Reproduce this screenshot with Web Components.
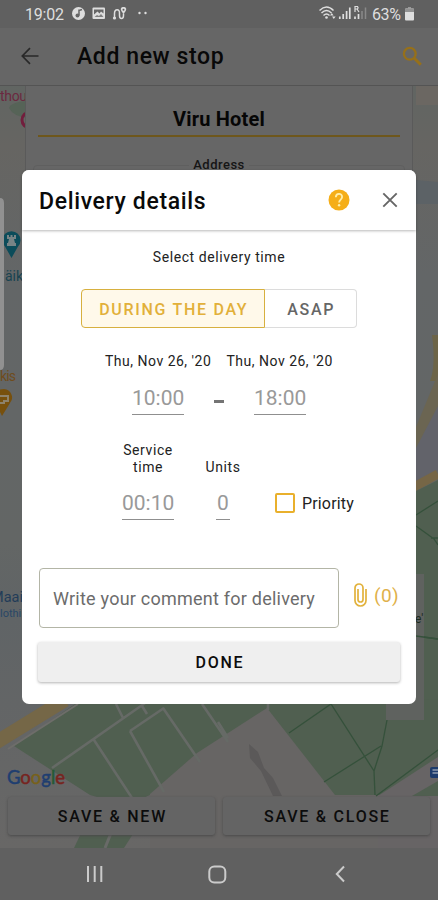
<!DOCTYPE html>
<html lang="en">
<head>
<meta charset="utf-8">
<title>Delivery details</title>
<style>
html,body{margin:0;height:100%;overflow:hidden;background:#666}
body{font-family:Roboto,"Liberation Sans",sans-serif}
</style>
</head>
<body>
<delivery-app></delivery-app>
<script>
const define = (name, html) => {
  const t = document.createElement('template');
  t.innerHTML = html;
  customElements.define(name, class extends HTMLElement {
    connectedCallback() {
      if (this.shadowRoot) return;
      this.attachShadow({mode: 'open'}).append(t.content.cloneNode(true));
    }
  });
};

define('status-bar', `
<style>
:host{display:flex;align-items:center;height:28px;box-sizing:border-box;padding:0 24px 0 25px;background:#606060;color:#dedede;font-size:16px;line-height:28px;flex:none}
.clock{width:47px;letter-spacing:-.2px;padding-top:1px}
svg{display:block;flex:none}
.gap{flex:1}
.pct{margin-left:5px;width:33px;letter-spacing:-.4px;padding-top:1px}
</style>
<span class="clock">19:02</span>
<svg width="80" height="28" viewBox="72 0 80 28"><circle cx="78.500" cy="13.500" r="6.500" fill="#dedede"/><path d="M79 9.500v6M79 10.500l3-1" stroke="#666" stroke-width="1.500" fill="none"/><circle cx="77.500" cy="15.500" r="2" fill="#666"/>
<rect x="92.500" y="7.500" width="12.500" height="11.500" rx="1" fill="#dedede"/><path d="M94 9.500h9.500v4l-2.500-2-1.500 2-2-2-3.500 3z" fill="#666"/><path d="M94.500 17l2.500-2 2 1 2-2 2.500 3z" fill="#808080"/>
<path d="M114.500 18.500v-5c0-5 5.500-5 5 0v2c0 4 4 4 4 0v-2" fill="none" stroke="#dedede" stroke-width="1.500"/><circle cx="114.500" cy="18" r="1.600" fill="#dedede"/><path d="M123.500 14c-5-5.500-2-7 0-7s5 1.500 0 7z" fill="#dedede"/><circle cx="123.500" cy="9.700" r="1" fill="#606060"/>
<circle cx="139.500" cy="13" r="1.200" fill="#dedede"/><circle cx="145.500" cy="13" r="1.200" fill="#dedede"/></svg>
<span class="gap"></span>
<svg width="48" height="28" viewBox="319 0 48 28"><g fill="none" stroke="#dedede" stroke-width="1.500"><path d="M319.500 10.500Q326.500 3.500 333.500 10.500M321.500 13Q326.500 8 331.500 13M323.500 15.500Q326.500 12.500 329.500 15.500"/></g><circle cx="326.500" cy="17.500" r="1.300" fill="#dedede"/><path d="M330 15.500l1.800-2.500 1.800 2.500zM332 16.500h3.600l-1.800 2.500z" fill="#dedede"/>
<path d="M339.800 19v-2.500M343.200 19v-5M346.600 19v-8M349.800 19v-11.500" stroke="#dedede" stroke-width="1.700"/><path d="M355 12V6.500h2.500q1.200 1.200 0 2.500H355M357 9l2 3" fill="none" stroke="#dedede" stroke-width="1.200"/><path d="M355 19v-2.500M358.500 19v-5" stroke="#dedede" stroke-width="1.700"/><path d="M362 19v-8M365.500 19v-11.500" stroke="#898989" stroke-width="1.500"/></svg>
<span class="pct">63%</span>
<svg width="9" height="14" viewBox="0 0 9 14"><path d="M3 0h3v1.500H3z" fill="#999"/><rect y="1.500" width="9" height="12" rx="1" fill="#dedede"/><path d="M0 2.500q0-1 1-1h7q1 0 1 1V5H0z" fill="#929292"/></svg>`);

define('app-header', `
<style>
:host{display:flex;align-items:center;height:58px;box-sizing:border-box;padding:0 16px 0 21px;background:#666;flex:none;border-bottom:1px solid #545454}
h1{flex:1;margin:0 0 0 38px;font-size:23px;font-weight:500;letter-spacing:.6px;color:#080808}
svg{flex:none;display:block}
</style>
<svg width="18" height="18" viewBox="0 0 18 18" style="margin-bottom:1px"><path d="M17.500 9H1.500M9 1.200L1.300 9 9 16.800" fill="none" stroke="#292929" stroke-width="1.700"/></svg>
<h1><slot></slot></h1>
<svg width="20" height="20" viewBox="0 0 20 20" style="margin-bottom:2px"><circle cx="7.800" cy="7.800" r="5.900" fill="none" stroke="#96701a" stroke-width="2.300"/><path d="M11.900 11.900l6.900 6.900" stroke="#96701a" stroke-width="2.900"/></svg>`);

define('city-map', `
<style>
:host{display:block;position:absolute;inset:0;font-family:Roboto,"Liberation Sans",sans-serif}
svg{display:block}
</style>
<svg width="438" height="762" viewBox="0 86 438 762">
<defs><linearGradient id="l" x2="0" y2="1"><stop offset="0" stop-color="#616562"/><stop offset=".08" stop-color="#666562"/><stop offset=".25" stop-color="#636667"/><stop offset=".6" stop-color="#636665"/><stop offset=".7" stop-color="#606466"/><stop offset="1" stop-color="#686766"/></linearGradient></defs>
<rect y="85" width="438" height="763" fill="url(#l)"/>
<path d="M416 85h22v20h-22z" fill="#6b6762"/><path d="M416 180l22 2v22h-22z" fill="#5c6266"/>
<path d="M9 108q2-6 18-7v17q-14-2-18-10z" fill="#566357"/>
<path d="M416 435L438 395V470L416 483z" fill="#62636a"/>
<path d="M432 335h6v46h-8q6-15 2-46z" fill="#6c6448"/><path d="M416 427l22-53v32l-22 42z" fill="#6b6552"/><path d="M414 487l24-13" stroke="#766646" stroke-width="9"/>
<path d="M414 492l24-12V766L381 848H300L266 705H200z" fill="#505f50"/>
<path d="M75 704L14 746l76 49q38 12 62-1l68-52 48-33 64 86h58l48-29 0-67z" fill="#505f50"/>
<path d="M197 753L267 708L335 795V848H150V794z" fill="#676564"/>
<path d="M335 795h46v53h-46z" fill="#676564"/>
<path d="M378 796L438 757v91h-60z" fill="#676465"/><path d="M412 796l26-15v15z" fill="#505f50"/>
<path d="M74 848l12-25h54l-16 25z" fill="#505f50"/><path d="M105 848l10-25" stroke="#696a68" stroke-width="3"/>
<path d="M-5 743L65 700" stroke="#756747" stroke-width="14"/><path d="M8 749l70-45" stroke="#6e6d6a" stroke-width="2"/>
<g fill="none" stroke="#666a66" stroke-width="2.600"><path d="M52 768L148 701M94 740l38 58M130 731l34-23M130 731l34 61M163 708l37 54M202 704l26 38M116 704l7 14M142 706l5 8M268 700v10M218 722l10 16"/></g>
<g fill="none" stroke="#35513b" stroke-width="1.300"><path d="M289 733l42-29 43 67 1 24M324 782l57-36M387 720l-5 26-8 25M376 796l62-46M416 515l22-14M416 526l18 13 4 6M431 538h7M416 636l22 3"/></g>
<path d="M386 574h38v146h-38z" fill="#5f625f"/><path d="M416 636l22 3" stroke="#35513b" stroke-width="1.300"/>
<path d="M249 744l9 8 6 16 9 10 9 18h-9l-12-25-11-13z" fill="#5b5959"/>
<g font-size="14"><text x="0" y="101" fill="#6c2940" textLength="27">thou</text><text x="5" y="281" fill="#184350">äik</text><text x="0" y="381" fill="#6f4c1d" textLength="16">kis</text><text x="-9" y="602" font-size="14.500" fill="#233c58">Maai</text><text x="0" y="616.500" font-size="11" fill="#294767">lothi</text><text x="415" y="623" font-size="12" fill="#1c2b20">e'</text></g>
<circle cx="30" cy="120" r="8" fill="none" stroke="#721e3d" stroke-width="3"/>
<path d="M11.500 258L5 246.500a9 9 0 1 1 13 0z" fill="#0c4c5a"/><path d="M7 235h2v2h1.500v-2h2v2H14v-2h2v4h-2l1 4h1v3H7v-3h1l1-4H7z" fill="#788486"/>
<path d="M2 416l-6-12V392q2-3 8-3a8.500 8.500 0 0 1 6 14z" fill="#77500d"/><path d="M-2 396h10v5H4v2h-6" fill="none" stroke="#8d826b" stroke-width="2"/>
<path d="M0 198q4 0 4 5v162q0 5-4 5z" fill="#919191"/>
<rect x="430" y="767" width="14" height="11" rx="2" fill="#1d3b6c"/><path d="M432.500 770h6M432.500 773h6" stroke="#909cae" stroke-width="1.400"/>
<g font-family="Lato,Roboto,sans-serif" font-size="18.500" stroke-width=".5"><text x="7" y="783.500" textLength="58" lengthAdjust="spacingAndGlyphs"><tspan fill="#1f3e70" stroke="#1f3e70">G</tspan><tspan fill="#77241f" stroke="#77241f">o</tspan><tspan fill="#78611b" stroke="#78611b">o</tspan><tspan fill="#1f3e70" stroke="#1f3e70">g</tspan><tspan fill="#245b35" stroke="#245b35">l</tspan><tspan fill="#77241f" stroke="#77241f">e</tspan></text></g>
</svg>`);

define('stop-card', `
<style>
:host{display:flex;flex-direction:column;position:relative;margin:0 25px;height:400px;box-sizing:border-box;padding:21px 12px 0;background:#666;border:1px solid #5a5a5a;border-top:0}
.name{font-size:20px;line-height:24px;font-weight:700;text-align:center;color:#060606;letter-spacing:.2px;padding-bottom:4px;border-bottom:2px solid #6e571c}
fieldset{margin:20px -5px 0;padding:0;border:1px solid #5f5f5f;border-radius:4px;height:60px;text-align:center}
legend{margin:auto;padding:0 4px;font-size:13px;line-height:16px;color:#151515;letter-spacing:.5px;font-weight:500}
</style>
<div class="name"><slot></slot></div>
<fieldset><legend>Address</legend></fieldset>`);

define('flat-button', `
<style>
:host{display:flex;align-items:center;justify-content:center;height:38px;border-radius:3px;font-size:16px;font-weight:500;letter-spacing:1.75px;text-indent:1.75px;background:var(--bg,#efefef);color:#0c0c0c;box-shadow:0 1px 3px var(--sh,rgba(0,0,0,.3))}
</style><slot></slot>`);

define('nav-bar', `
<style>
:host{display:flex;align-items:center;height:52px;box-sizing:border-box;padding:0 0 0 86px;background:#606060;flex:none}
</style>
<svg width="17" height="18" viewBox="0 0 17 18"><path d="M2 1v16M8.700 1v16M15.300 1v16" stroke="#cbcbcb" stroke-width="2"/></svg>
<svg width="19" height="19" viewBox="0 0 19 19" style="margin:0 118px 0 105px"><rect x="1.300" y="1.500" width="16" height="16" rx="5" fill="none" stroke="#cbcbcb" stroke-width="2"/></svg>
<svg width="10" height="18" viewBox="0 0 10 18" style="margin-left:-10px"><path d="M9 1.500L1.800 9 9 16.500" fill="none" stroke="#cbcbcb" stroke-width="2"/></svg>`);

define('dialog-header', `
<style>
:host{display:flex;align-items:center;height:60px;box-sizing:border-box;padding:0 18px 0 17px;box-shadow:0 1px 3px rgba(0,0,0,.28);border-radius:7px 7px 0 0;background:#fff}
h2{flex:1;margin:3px 0 0;font-size:23px;font-weight:500;letter-spacing:.65px;color:#0a0a0a}
svg{display:block}
</style>
<h2><slot></slot></h2>
<svg width="22" height="22" viewBox="0 0 22 22" style="margin-right:32px"><circle cx="11" cy="11" r="10.500" fill="#f5ae18"/><path d="M7.800 8.300C8 3.500 14.200 4 14.100 8c0 2.500-3 2.700-3 5.500" fill="none" stroke="#ffefaa" stroke-width="1.800"/><circle cx="11.100" cy="16.200" r="1.200" fill="#ffefaa"/></svg>
<svg width="16" height="16" viewBox="0 0 16 16"><path d="M1.300 1.300l13.400 13.400M14.700 1.300L1.300 14.700" stroke="#666" stroke-width="1.900"/></svg>`);

define('segmented-toggle', `
<style>
:host{display:flex;width:276px;height:39px;font-size:16px;font-weight:500;letter-spacing:1.7px}
span{display:flex;align-items:center;justify-content:center;box-sizing:border-box;padding:2px 0 0 1.500px}
.on{width:184px;border:1px solid #d7b03f;border-radius:4px 0 0 4px;background:#fff9ea;color:#e2b03a}
.off{flex:1;border:1px solid #dcdcdc;border-left:0;border-radius:0 4px 4px 0;color:#666}
</style>
<span class="on"><slot name="on"></slot></span><span class="off"><slot name="off"></slot></span>`);

define('value-field', `
<style>
:host{display:block;width:var(--w,52px);height:31px;box-sizing:border-box;border-bottom:1px solid #8f8f8f;font-size:21px;line-height:29px;color:#999;text-align:center;white-space:nowrap;letter-spacing:0}
</style><slot></slot>`);

define('check-box', `
<style>
:host{display:flex;align-items:center;gap:7px;font-size:16px;letter-spacing:.15px;color:#222}
i{width:20px;height:20px;box-sizing:border-box;border:2px solid #e9b02c;border-radius:2px}
span{padding-top:1px}
</style><i></i><span><slot></slot></span>`);

define('comment-box', `
<style>
:host{display:flex;align-items:center;width:301px;height:60px;box-sizing:border-box;border:1px solid #b3b5a6;border-radius:4px;padding-left:13px;font-size:18px;letter-spacing:.23px;color:#6c6c6c}
</style><slot></slot>`);

define('attach-link', `
<style>
:host{display:flex;align-items:center;gap:7px;color:#dfb14a;font-size:19px;height:54px;letter-spacing:.4px}
</style>
<svg width="13" height="24" viewBox="0 0 13 24"><path d="M12 6v11.500a5.500 5.500 0 0 1-11 0V5a4 4 0 0 1 8 0v11.500a2.500 2.500 0 0 1-5 0V6" fill="none" stroke="#e2b23c" stroke-width="1.700"/></svg>
<span><slot></slot></span>`);

define('delivery-dialog', `
<style>
:host{display:flex;flex-direction:column;position:absolute;left:22px;top:170px;width:394px;height:534px;box-sizing:border-box;background:#fff;border-radius:7px;font-size:14px;color:#222;letter-spacing:.58px}
.lead{margin:19px 0 0;line-height:16px;text-align:center}
segmented-toggle{margin:24px 0 0 59px}
.dates{display:flex;gap:15px;margin:25px 0 0 83px;line-height:16px;letter-spacing:.5px}
.dates span{width:106.500px;white-space:nowrap}
.times{display:flex;align-items:center;margin:15px 0 0 110px}
.dash{width:10px;height:3px;margin:4px 30px 0;background:#747474}
.labels{display:flex;align-items:flex-end;margin:27px 0 0 92px;line-height:17px;text-align:center}
.labels span:first-child{width:68px}
.labels span+span{width:60px;margin-left:11px}
.values{display:flex;margin:13px 0 0 100px}
.values value-field+value-field{--w:14px;margin-left:42px}
check-box{margin:-3px 0 0 45px}
.comment{display:flex;gap:15px;margin:48px 0 0 17px}
flat-button{margin:14px 16px 0;height:40px;box-sizing:border-box}
comment-box{width:300px}
</style>
<dialog-header>Delivery details</dialog-header>
<div class="lead">Select delivery time</div>
<segmented-toggle><span slot="on">DURING THE DAY</span><span slot="off">ASAP</span></segmented-toggle>
<div class="dates"><span>Thu, Nov 26, '20</span><span>Thu, Nov 26, '20</span></div>
<div class="times"><value-field>10:00</value-field><div class="dash"></div><value-field>18:00</value-field></div>
<div class="labels"><span>Service<br>time</span><span>Units</span></div>
<div class="values"><value-field>00:10</value-field><value-field>0</value-field><check-box>Priority</check-box></div>
<div class="comment"><comment-box>Write your comment for delivery</comment-box><attach-link>(0)</attach-link></div>
<flat-button>DONE</flat-button>`);

define('delivery-app', `
<style>
:host{display:flex;flex-direction:column;position:relative;width:438px;height:900px;overflow:hidden}
main{position:relative;flex:1;overflow:hidden;display:flex;flex-direction:column}
.actions{position:relative;display:grid;grid-template-columns:1fr 1fr;gap:8px;margin:auto 8px 13px;--bg:#646464;--sh:#4a4a4a}
</style>
<status-bar></status-bar>
<app-header>Add new stop</app-header>
<main><city-map></city-map><stop-card>Viru Hotel</stop-card>
<div class="actions"><flat-button>SAVE &amp; NEW</flat-button><flat-button>SAVE &amp; CLOSE</flat-button></div></main>
<nav-bar></nav-bar>
<delivery-dialog></delivery-dialog>`);
</script>
</body>
</html>
